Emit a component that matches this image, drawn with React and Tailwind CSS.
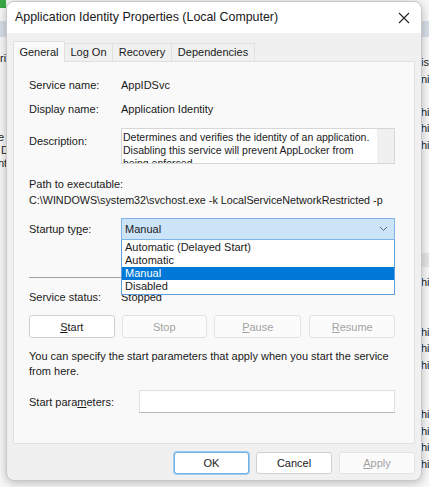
import React from "react";

const F = { fontFamily: '"Liberation Sans", Arial, sans-serif' };

function Btn({ children, disabled, primary, className = "" }) {
  return (
    <div
      className={
        "flex items-center justify-center rounded-[3px] border text-[11px] " +
        (primary
          ? "border-[#6fb0e6] bg-white text-[#1a1a1a] ring-1 ring-[#9fcbef] "
          : disabled
          ? "border-[#e3e3e3] bg-[#fbfbfb] text-[#a3a3a3] "
          : "border-[#d0d0d0] bg-white text-[#1a1a1a] ") +
        className
      }
    >
      {children}
    </div>
  );
}

export default function App() {
  return (
    <div className="relative h-[487px] w-[429px] overflow-hidden bg-[#f7f7f7]" style={F}>
      {/* background window fragments */}
      <div className="absolute left-0 top-0 h-[8px] w-[6px] bg-[#3aa845]" />
      <div className="absolute left-0 top-[21px] h-[16px] w-[429px] bg-[#d5dde6]" />
      <div className="absolute left-[0px] top-[52px] text-[11px] leading-[13px] text-[#222]">ri</div>
      <div className="absolute left-[-2px] top-[131px] text-[11px] leading-[13px] text-[#222]">
        <div>e</div>
        <div>&nbsp;D</div>
        <div>nt</div>
      </div>
      <div className="absolute right-0 top-[54px] flex w-[8px] flex-col text-[11px] leading-[16.5px] text-[#222]">
        <div>is</div>
        <div>ni</div>
        <div>&nbsp;</div>
        <div>hi</div>
        <div>hi</div>
        <div>hi</div>
      </div>
      <div className="absolute right-0 top-[253px] h-[14px] w-[8px] bg-[#e4e4e4]" />
      <div className="absolute right-0 top-[274px] flex w-[8px] flex-col text-[11px] leading-[16.5px] text-[#222]">
        <div>hi</div>
        <div>&nbsp;</div>
        <div>&nbsp;</div>
        <div>hi</div>
        <div>hi</div>
        <div>hi</div>
        <div>&nbsp;</div>
        <div>&nbsp;</div>
        <div>hi</div>
        <div>hi</div>
        <div>hi</div>
        <div>hi</div>
      </div>

      {/* dialog */}
      <div className="absolute left-[6px] top-[1px] flex h-[480px] w-[416px] flex-col overflow-hidden rounded-[8px] border border-[#c8c8c8] bg-[#f0f0f0] shadow-[0_2px_10px_rgba(0,0,0,0.25)]">
        {/* title bar */}
        <div className="flex h-[31px] shrink-0 items-center justify-between bg-white pl-[8px] pr-[10px]">
          <span className="text-[12.4px] text-[#1a1a1a]">Application Identity Properties (Local Computer)</span>
          <svg width="12" height="12" viewBox="0 0 12 12" className="mr-[1px]">
            <path d="M1 1L11 11M11 1L1 11" stroke="#222" strokeWidth="1.1" />
          </svg>
        </div>

        {/* tabs */}
        <div className="mt-[8px] flex h-[20px] items-end pl-[6px] text-[11px] text-[#1a1a1a]">
          <div className="relative z-10 -mb-px flex h-[21px] w-[52px] items-start justify-center border border-b-0 border-[#e0e0e0] bg-[#f9f9f9] pt-[2px]">
            General
          </div>
          <div className="flex h-[18px] w-[48px] items-center justify-center border-t border-r border-[#e0e0e0] bg-[#f0f0f0]">
            Log On
          </div>
          <div className="flex h-[18px] w-[59px] items-center justify-center border-t border-r border-[#e0e0e0] bg-[#f0f0f0]">
            Recovery
          </div>
          <div className="flex h-[18px] w-[83px] items-center justify-center border-t border-r border-[#e0e0e0] bg-[#f0f0f0]">
            Dependencies
          </div>
        </div>

        {/* panel */}
        <div className="mx-[6px] flex h-[383px] flex-col border border-[#e0e0e0] bg-[#f9f9f9] pl-[15px] pr-[19px] text-[11px] leading-[16px] text-[#1a1a1a]">
          <div className="mt-[15px] flex h-[16px]">
            <span className="w-[92px]">Service name:</span>
            <span>AppIDSvc</span>
          </div>
          <div className="mt-[8px] flex h-[16px]">
            <span className="w-[92px]">Display name:</span>
            <span>Application Identity</span>
          </div>
          <div className="mt-[11px] flex">
            <span className="w-[92px] pt-[5px]">Description:</span>
            <div className="flex h-[36px] flex-1 overflow-hidden border border-[#d6d6d6] bg-white">
              <div className="flex-1 pl-[1px] pt-[2px] text-[10.5px] leading-[13px]">
                Determines and verifies the identity of an application. Disabling this service will prevent AppLocker from being enforced.
              </div>
              <div className="w-[17px] shrink-0 bg-[#f0f0f0]" />
            </div>
          </div>
          <div className="mt-[12px] h-[16px]">Path to executable:</div>
          <div className="h-[16px] whitespace-nowrap text-[10.75px]">C:\WINDOWS\system32\svchost.exe -k LocalServiceNetworkRestricted -p</div>

          {/* startup type */}
          <div className="relative mt-[10px] flex">
            <span className="w-[92px] pt-[3px]">
              Startup ty<span className="underline">p</span>e:
            </span>
            <div className="relative flex-1">
              <div className="flex h-[22px] items-center justify-between border border-[#7eb4ea] bg-[#cce4f7] pl-[3px] pr-[6px]">
                <span>Manual</span>
                <svg width="9" height="6" viewBox="0 0 9 6">
                  <path d="M1 1L4.5 4.5L8 1" stroke="#666" strokeWidth="1" fill="none" />
                </svg>
              </div>
              <div className="absolute left-0 right-0 top-[22px] z-20 flex flex-col border border-[#5f9ddb] border-t-0 bg-white py-[1px] leading-[13px]">
                <div className="pl-[3px]">Automatic (Delayed Start)</div>
                <div className="pl-[3px]">Automatic</div>
                <div className="bg-[#0078d7] pl-[3px] text-white">Manual</div>
                <div className="pl-[3px]">Disabled</div>
              </div>
            </div>
          </div>

          <div className="mt-[37px] h-px w-[120px] bg-[#a0a0a0]" />

          <div className="mt-[11px] flex h-[16px]">
            <span className="w-[92px]">Service status:</span>
            <span>Stopped</span>
          </div>

          <div className="mt-[10px] flex h-[23px] gap-[7px]">
            <Btn className="w-[86px]">
              <span><span className="underline">S</span>tart</span>
            </Btn>
            <Btn disabled className="w-[86px]">Stop</Btn>
            <Btn disabled className="w-[88px]">
              <span><span className="underline">P</span>ause</span>
            </Btn>
            <Btn disabled className="ml-[1px] w-[86px]">
              <span><span className="underline">R</span>esume</span>
            </Btn>
          </div>

          <div className="mt-[11px] leading-[15px]">
            You can specify the start parameters that apply when you start the service from here.
          </div>

          <div className="mt-[11px] flex items-center">
            <span className="w-[110px]">
              Start para<span className="underline">m</span>eters:
            </span>
            <div className="h-[23px] flex-1 border border-[#e0e0e0] border-b-[#b8b8b8] bg-white" />
          </div>
        </div>

        {/* footer */}
        <div className="mt-[8px] flex justify-end gap-[7px] pr-[6px]">
          <Btn primary className="h-[22px] w-[75px]">OK</Btn>
          <Btn className="h-[22px] w-[76px]">Cancel</Btn>
          <Btn disabled className="h-[22px] w-[76px]">
            <span><span className="underline">A</span>pply</span>
          </Btn>
        </div>
      </div>
    </div>
  );
}
